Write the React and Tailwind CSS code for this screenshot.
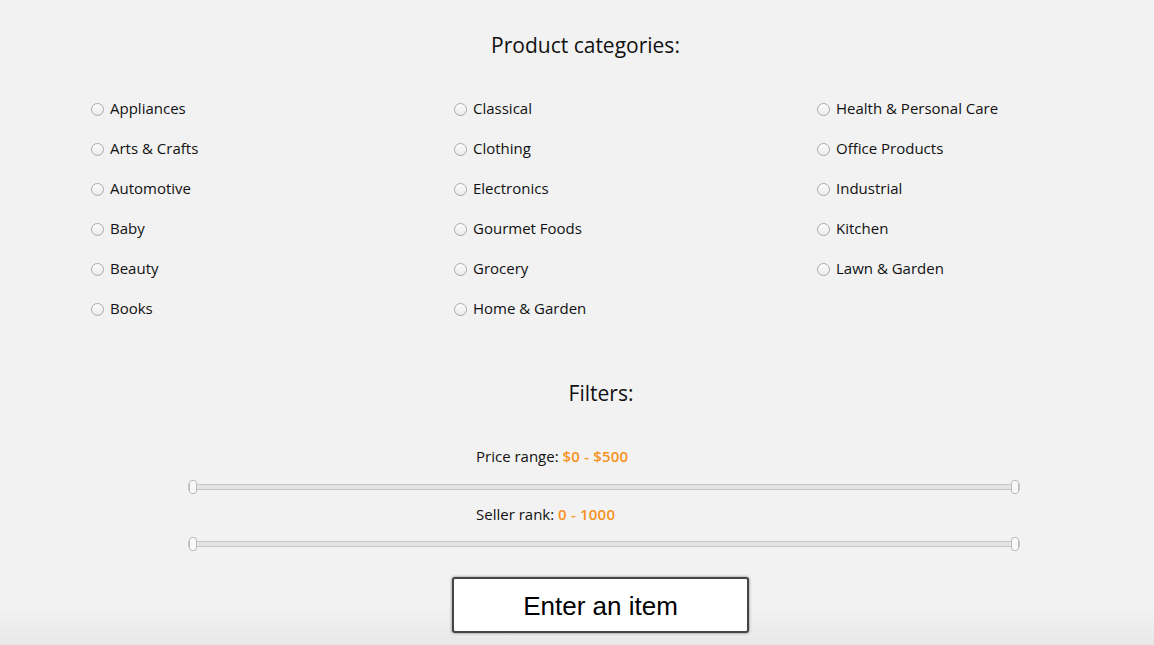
import React from 'react';

const columns = [
  ['Appliances', 'Arts & Crafts', 'Automotive', 'Baby', 'Beauty', 'Books'],
  ['Classical', 'Clothing', 'Electronics', 'Gourmet Foods', 'Grocery', 'Home & Garden'],
  ['Health & Personal Care', 'Office Products', 'Industrial', 'Kitchen', 'Lawn & Garden'],
];

function Radio() {
  return (
    <span className="mt-[2px] w-[13px] h-[13px] rounded-full border border-[#a9a9a9] bg-[linear-gradient(to_bottom,#fcfcfc,#ececec)] shrink-0" />
  );
}

function RangeSlider() {
  return (
    <div className="pl-[188px] w-[1020px] h-[14px] flex items-center">
      <div className="relative w-full h-[6px] bg-[#e4e4e4] border border-[#c6c6c6]">
        <span className="absolute left-0 top-[-5px] w-[8px] h-[14px] rounded-[3px] border border-[#bdbdbd] bg-[#f7f7f7]" />
        <span className="absolute right-0 top-[-5px] w-[8px] h-[14px] rounded-[3px] border border-[#bdbdbd] bg-[#f7f7f7]" />
      </div>
    </div>
  );
}

export default function App() {
  return (
    <div
      className="min-h-[645px] w-[1154px] overflow-hidden bg-[linear-gradient(to_bottom,#f2f2f2_94%,#e8e8e8)] text-[#111] font-['Open_Sans',sans-serif] flex flex-col"
    >
      <div className="pt-[31px] pl-[17px] flex justify-center">
        <h2 className="text-[21px] leading-[28px] font-normal">Product categories:</h2>
      </div>

      <div className="mt-[29px] pl-[91px] flex">
        {columns.map((col, i) => (
          <div key={i} className={i < 2 ? 'w-[363px] flex flex-col' : 'flex flex-col'}>
            {col.map((name) => (
              <label key={name} className="h-[40px] flex items-center gap-[6px] text-[15px] leading-[20px]">
                <Radio />
                <span>{name}</span>
              </label>
            ))}
          </div>
        ))}
      </div>

      <div className="mt-[51px] pl-[48px] flex justify-center">
        <h2 className="text-[21px] leading-[28px] font-normal">Filters:</h2>
      </div>

      <p className="mt-[39px] pl-[476px] text-[15px] leading-[20px]">
        Price range: <span className="text-[#f7931e] font-semibold tracking-[0.2px]">$0 - $500</span>
      </p>
      <div className="mt-[14px]">
        <RangeSlider />
      </div>

      <p className="mt-[10px] pl-[476px] text-[15px] leading-[20px]">
        Seller rank: <span className="text-[#f7931e] font-semibold tracking-[0.2px]">0 - 1000</span>
      </p>
      <div className="mt-[13px]">
        <RangeSlider />
      </div>

      <div className="mt-[26px] pl-[47px] flex justify-center">
        <button
          type="button"
          className="w-[297px] h-[56px] pt-[2px] bg-white border-2 border-[#444] rounded-[3px] shadow-[0_0_3px_rgba(0,0,0,0.5)] text-[26px] text-black font-['Liberation_Sans',Arial,sans-serif]"
        >
          Enter an item
        </button>
      </div>
    </div>
  );
}
